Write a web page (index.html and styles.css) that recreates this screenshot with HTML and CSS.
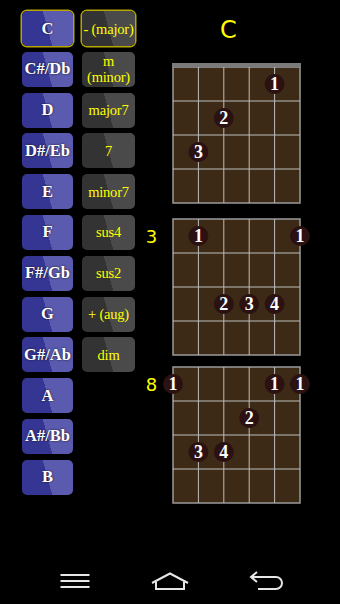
FILE: index.html
```html
<!DOCTYPE html>
<html lang="en">
<head>
    <meta charset="UTF-8">
    <meta name="viewport" content="width=device-width, initial-scale=1.0">
    <title>Chord Finder</title>
    <link rel="stylesheet" href="styles.css">
</head>
<body>
    <div class="main">
        <div class="notes">
            <a class="btn note selected">C</a>
            <a class="btn note">C#/Db</a>
            <a class="btn note">D</a>
            <a class="btn note">D#/Eb</a>
            <a class="btn note">E</a>
            <a class="btn note">F</a>
            <a class="btn note">F#/Gb</a>
            <a class="btn note">G</a>
            <a class="btn note">G#/Ab</a>
            <a class="btn note">A</a>
            <a class="btn note">A#/Bb</a>
            <a class="btn note">B</a>
        </div>
        <div class="types">
            <a class="btn type selected">- (major)</a>
            <a class="btn type">m<br>(minor)</a>
            <a class="btn type">major7</a>
            <a class="btn type">7</a>
            <a class="btn type">minor7</a>
            <a class="btn type">sus4</a>
            <a class="btn type">sus2</a>
            <a class="btn type">+ (aug)</a>
            <a class="btn type">dim</a>
        </div>
        <div class="charts">
            <div class="chord-name">C</div>

            <!-- open position -->
            <svg class="chart" width="170" height="144" viewBox="0 0 170 144">
                <rect x="33" y="6" width="127" height="136" fill="#3c2a16" stroke="#9a9a9a" stroke-width="1.5"/>
                <g stroke="#bdbdbd" stroke-width="1">
                    <line x1="58.4" y1="6" x2="58.4" y2="142"/>
                    <line x1="83.8" y1="6" x2="83.8" y2="142"/>
                    <line x1="109.2" y1="6" x2="109.2" y2="142"/>
                    <line x1="134.6" y1="6" x2="134.6" y2="142"/>
                    <line x1="33" y1="40" x2="160" y2="40"/>
                    <line x1="33" y1="74" x2="160" y2="74"/>
                    <line x1="33" y1="108" x2="160" y2="108"/>
                </g>
                <rect x="32" y="2" width="129" height="4" fill="#7a7a7a"/>
                <g class="dot"><circle cx="134.6" cy="23" r="10"/><text x="134.6" y="29">1</text></g>
                <g class="dot"><circle cx="83.8" cy="57" r="10"/><text x="83.8" y="63">2</text></g>
                <g class="dot"><circle cx="58.4" cy="91" r="10"/><text x="58.4" y="97">3</text></g>
            </svg>

            <!-- barre at 3 -->
            <svg class="chart chart-2" width="170" height="144" viewBox="0 0 170 144">
                <rect x="33" y="6" width="127" height="136" fill="#3c2a16" stroke="#9a9a9a" stroke-width="1.5"/>
                <g stroke="#bdbdbd" stroke-width="1">
                    <line x1="58.4" y1="6" x2="58.4" y2="142"/>
                    <line x1="83.8" y1="6" x2="83.8" y2="142"/>
                    <line x1="109.2" y1="6" x2="109.2" y2="142"/>
                    <line x1="134.6" y1="6" x2="134.6" y2="142"/>
                    <line x1="33" y1="40" x2="160" y2="40"/>
                    <line x1="33" y1="74" x2="160" y2="74"/>
                    <line x1="33" y1="108" x2="160" y2="108"/>
                </g>
                <text class="fret-num" x="11.5" y="29.5">3</text>
                <g class="dot"><circle cx="58.4" cy="23" r="10"/><text x="58.4" y="29">1</text></g>
                <g class="dot"><circle cx="160" cy="23" r="10"/><text x="160" y="29">1</text></g>
                <g class="dot"><circle cx="83.8" cy="91" r="10"/><text x="83.8" y="97">2</text></g>
                <g class="dot"><circle cx="109.2" cy="91" r="10"/><text x="109.2" y="97">3</text></g>
                <g class="dot"><circle cx="134.6" cy="91" r="10"/><text x="134.6" y="97">4</text></g>
            </svg>

            <!-- barre at 8 -->
            <svg class="chart chart-3" width="170" height="144" viewBox="0 0 170 144">
                <rect x="33" y="6" width="127" height="136" fill="#3c2a16" stroke="#9a9a9a" stroke-width="1.5"/>
                <g stroke="#bdbdbd" stroke-width="1">
                    <line x1="58.4" y1="6" x2="58.4" y2="142"/>
                    <line x1="83.8" y1="6" x2="83.8" y2="142"/>
                    <line x1="109.2" y1="6" x2="109.2" y2="142"/>
                    <line x1="134.6" y1="6" x2="134.6" y2="142"/>
                    <line x1="33" y1="40" x2="160" y2="40"/>
                    <line x1="33" y1="74" x2="160" y2="74"/>
                    <line x1="33" y1="108" x2="160" y2="108"/>
                </g>
                <text class="fret-num" x="11.5" y="29.5">8</text>
                <g class="dot"><circle cx="33" cy="23" r="10"/><text x="33" y="29">1</text></g>
                <g class="dot"><circle cx="134.6" cy="23" r="10"/><text x="134.6" y="29">1</text></g>
                <g class="dot"><circle cx="160" cy="23" r="10"/><text x="160" y="29">1</text></g>
                <g class="dot"><circle cx="109.2" cy="57" r="10"/><text x="109.2" y="63">2</text></g>
                <g class="dot"><circle cx="58.4" cy="91" r="10"/><text x="58.4" y="97">3</text></g>
                <g class="dot"><circle cx="83.8" cy="91" r="10"/><text x="83.8" y="97">4</text></g>
            </svg>
        </div>
    </div>
    <nav>
        <a class="nav-btn">
            <svg width="60" height="24" viewBox="0 0 60 24">
                <g stroke="#e6e6e6" stroke-width="2">
                    <line x1="15.5" y1="6" x2="44.5" y2="6"/>
                    <line x1="15.5" y1="12" x2="44.5" y2="12"/>
                    <line x1="15.5" y1="18" x2="44.5" y2="18"/>
                </g>
            </svg>
        </a>
        <a class="nav-btn">
            <svg width="60" height="24" viewBox="0 0 60 24">
                <path d="M12 14 L30 4.5 L48 14 M16 13 V20 H44 V13" fill="none" stroke="#e6e6e6" stroke-width="2"/>
            </svg>
        </a>
        <a class="nav-btn">
            <svg width="60" height="24" viewBox="0 0 60 24">
                <path d="M15 8 H40 A6 6 0 0 1 40 20 H22" fill="none" stroke="#e6e6e6" stroke-width="2"/>
                <path d="M21 3 L15 8 L21 13" fill="none" stroke="#e6e6e6" stroke-width="2"/>
            </svg>
        </a>
    </nav>
</body>
</html>
```

FILE: styles.css
```css
body, html {
    margin: 0;
    padding: 0;
    height: 100%;
    overflow: hidden;
    background: #000;
}
body {
    display: flex;
    flex-direction: column;
}
.main {
    flex: 1;
    display: flex;
    padding-left: 22px;
}
.notes, .types {
    display: flex;
    flex-direction: column;
    gap: 5.8px;
    padding-top: 11px;
}
.notes {
    width: 51px;
}
.types {
    width: 53px;
    margin-left: 9px;
}
.btn {
    height: 35px;
    display: flex;
    align-items: center;
    justify-content: center;
    text-align: center;
    border-radius: 5px;
    font-family: "Liberation Serif", "Times New Roman", serif;
    cursor: pointer;
}
.note {
    background: linear-gradient(75deg, #353594 50%, #5a5aae 50%);
    color: #fff;
    font-size: 16.5px;
    font-weight: bold;
    text-shadow: 0 0 2px #111;
}
.type {
    background: linear-gradient(75deg, #333333 50%, #4a4a4a 50%);
    color: #ffff00;
    font-size: 14.5px;
    line-height: 16px;
    letter-spacing: -0.2px;
}
.btn.selected {
    box-shadow: 0 0 0 1.5px #b5a600;
}
.charts {
    margin-left: 5px;
    width: 200px;
}
.chord-name {
    padding: 18px 0 0 80px;
    height: 24px;
    margin-bottom: 19px;
    font-family: "DejaVu Sans", sans-serif;
    font-size: 24px;
    line-height: 24px;
    color: #ffff00;
}
.chart {
    display: block;
}
.chart-2 {
    margin-top: 8px;
}
.chart-3 {
    margin-top: 4px;
}
.dot circle {
    fill: #2b1111;
}
.dot text {
    fill: #fff;
    font-family: "Liberation Serif", serif;
    font-weight: bold;
    font-size: 18px;
    text-anchor: middle;
}
.fret-num {
    fill: #ffff00;
    font-family: "DejaVu Sans", sans-serif;
    font-size: 18px;
    text-anchor: middle;
}
nav {
    height: 48px;
    display: flex;
    justify-content: center;
    align-items: flex-start;
    gap: 35.5px;
}
.nav-btn {
    width: 60px;
    height: 24px;
    margin-top: 13px;
}
.nav-btn svg {
    display: block;
}
```
